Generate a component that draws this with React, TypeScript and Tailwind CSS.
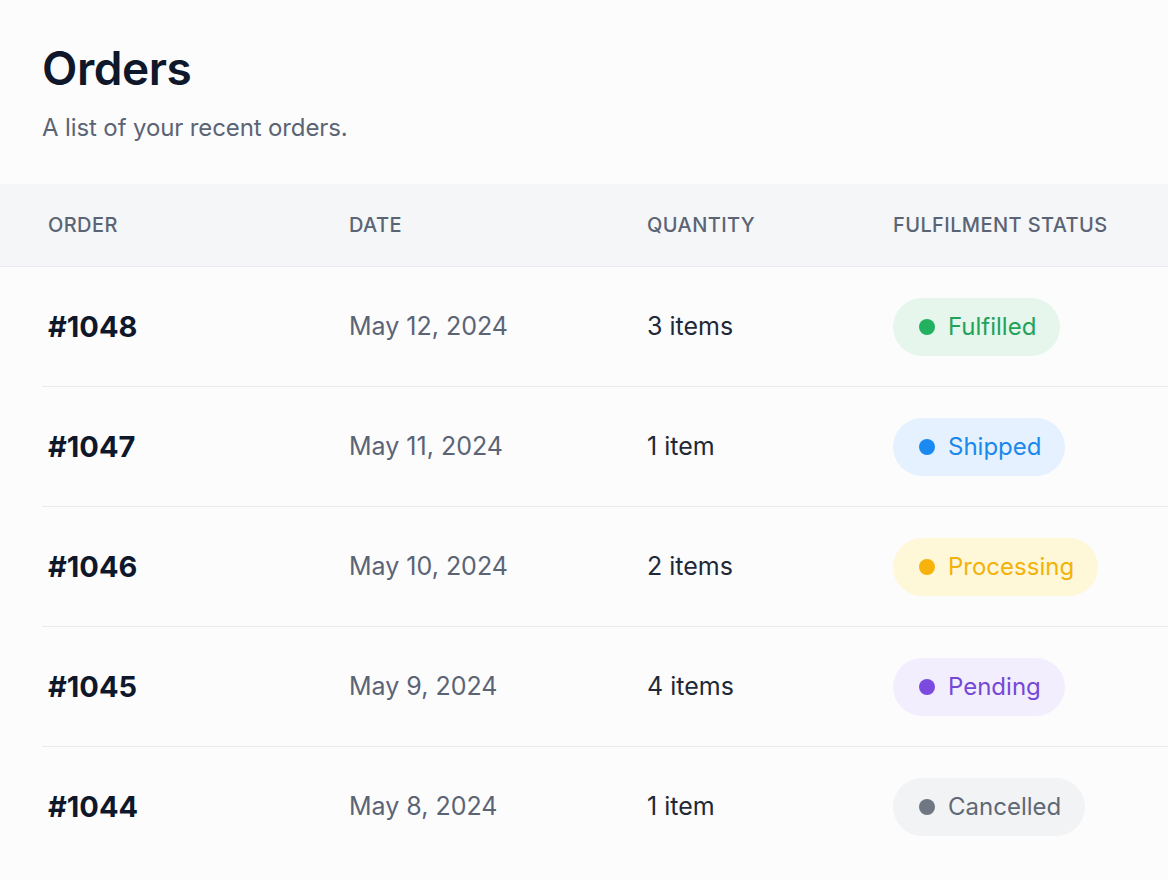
type Status = "Fulfilled" | "Shipped" | "Processing" | "Pending" | "Cancelled";

type Order = {
  id: string;
  date: string;
  quantity: string;
  status: Status;
};

const orders: Order[] = [
  { id: "#1048", date: "May 12, 2024", quantity: "3 items", status: "Fulfilled" },
  { id: "#1047", date: "May 11, 2024", quantity: "1 item", status: "Shipped" },
  { id: "#1046", date: "May 10, 2024", quantity: "2 items", status: "Processing" },
  { id: "#1045", date: "May 9, 2024", quantity: "4 items", status: "Pending" },
  { id: "#1044", date: "May 8, 2024", quantity: "1 item", status: "Cancelled" },
];

const badgeStyles: Record<Status, { pill: string; dot: string }> = {
  Fulfilled: { pill: "bg-[#e6f6ec] text-[#22a25a]", dot: "bg-[#22b15f]" },
  Shipped: { pill: "bg-[#e5f1fe] text-[#1a88ec]", dot: "bg-[#1a8af2]" },
  Processing: { pill: "bg-[#fef7d8] text-[#f2b20a]", dot: "bg-[#f7b20c]" },
  Pending: { pill: "bg-[#f3eefd] text-[#7548d8]", dot: "bg-[#7b4be0]" },
  Cancelled: { pill: "bg-[#f2f3f5] text-[#5f6875]", dot: "bg-[#6f7782]" },
};

const StatusBadge = ({ status }: { status: Status }) => {
  const style = badgeStyles[status];
  return (
    <span
      className={`inline-flex h-[58px] items-center gap-[13px] rounded-full pl-[26px] pr-[24px] text-[24px] ${style.pill}`}
    >
      <span className={`h-[16px] w-[16px] rounded-full ${style.dot}`} />
      {status}
    </span>
  );
};

const cols = "grid grid-cols-[301px_298px_246px_1fr] items-center pl-[6px]";

const App = () => {
  return (
    <div
      className="min-h-screen w-full bg-[#fcfcfd] text-[#111827]"
      style={{ fontFamily: "Inter, 'Noto Sans', sans-serif" }}
    >
      {/* Heading */}
      <div className="px-[42px] pt-[39px] pb-[40px]">
        <h1 className="text-[46px] font-semibold leading-[58px] tracking-[-0.01em] text-[#0f172a]">
          Orders
        </h1>
        <p className="mt-[15px] text-[24px] leading-[32px] tracking-[-0.005em] text-[#5b6474]">
          A list of your recent orders.
        </p>
      </div>

      {/* Table header */}
      <div className="border-b border-[#e8eaee] bg-[#f5f6f8] px-[42px]">
        <div className={`${cols} h-[82px] text-[20px] font-medium uppercase tracking-[0.02em] text-[#5b6474]`}>
          <div>Order</div>
          <div>Date</div>
          <div>Quantity</div>
          <div>Fulfilment Status</div>
        </div>
      </div>

      {/* Rows */}
      <div className="pl-[42px]">
        {orders.map((order, i) => (
          <div
            key={order.id}
            className={`${cols} h-[120px] ${i < orders.length - 1 ? "border-b border-[#e8eaee]" : ""}`}
          >
            <div className="text-[29px] font-bold text-[#0f172a]">{order.id}</div>
            <div className="text-[25px] text-[#5b6474]">{order.date}</div>
            <div className="text-[25px] text-[#1f2937]">{order.quantity}</div>
            <div>
              <StatusBadge status={order.status} />
            </div>
          </div>
        ))}
      </div>
    </div>
  );
};

export default App;
